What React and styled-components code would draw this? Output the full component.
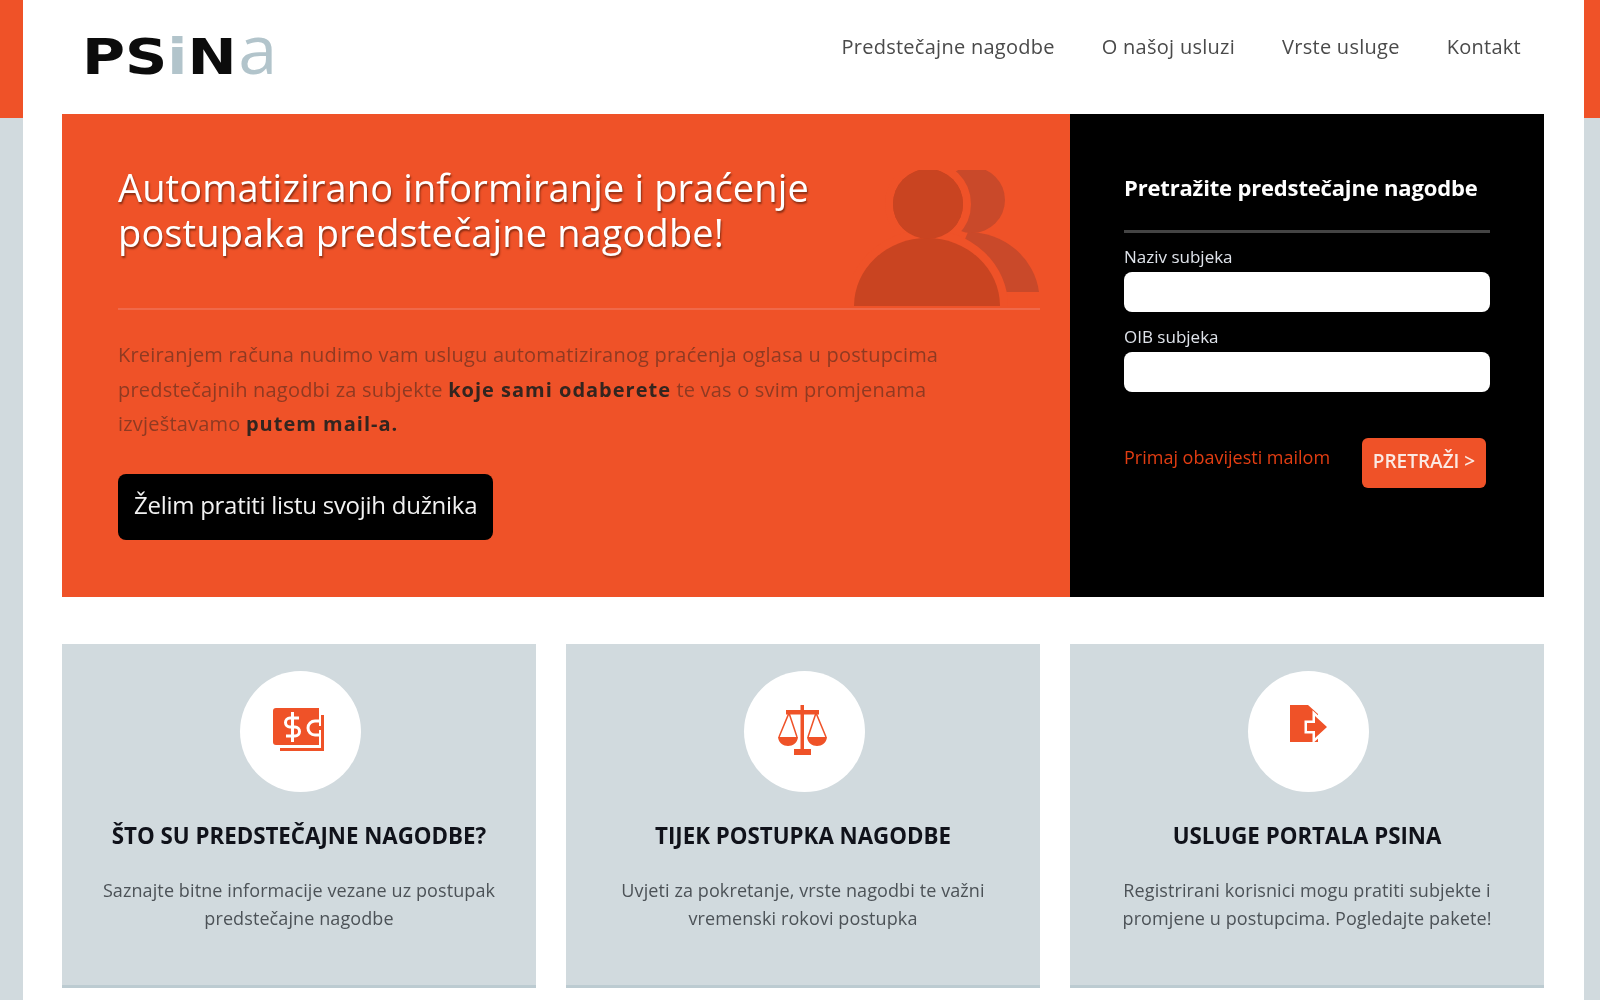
import React from "react";
import styled, { createGlobalStyle } from "styled-components";

const orange = "#ef5228";
const grey = "#d1dade";

const GlobalStyle = createGlobalStyle`
  html, body {
    margin: 0;
    padding: 0;
    height: 1000px;
    overflow: hidden;
  }
  body {
    font-family: "Open Sans", "Liberation Sans", sans-serif;
    background: linear-gradient(${orange} 0, ${orange} 118px, ${grey} 118px);
  }
`;

const Container = styled.div`
  margin: 0 16px 0 23px;
  height: 1000px;
  background: #fff;
  padding: 0 40px 0 39px;
  box-sizing: border-box;
  overflow: hidden;
  filter: blur(0.4px);
`;

const Header = styled.header`
  height: 114px;
  display: flex;
  justify-content: space-between;
  padding: 0 23px 0 20px;
`;

const Logo = styled.div`
  font-family: "DejaVu Sans", sans-serif;
  font-size: 50px;
  line-height: 50px;
  padding-top: 23px;
  white-space: nowrap;
  transform: scaleX(1.175);
  transform-origin: left top;
`;

const LogoLetter = styled.span`
  color: ${(p) => (p.$light ? "#b2c4cb" : "#0c0c0c")};
  font-weight: 700;
`;

const LogoTail = styled.span`
  display: inline-block;
  margin-left: 1px;
  font-family: "Open Sans", sans-serif;
  font-size: 68px;
  line-height: 50px;
  font-weight: 400;
  color: #b2c4cb;
  transform: scaleX(0.88);
  transform-origin: left center;
`;

const Nav = styled.nav`
  display: flex;
  gap: 47px;
  padding-top: 34px;
`;

const NavLink = styled.a`
  font-size: 20px;
  line-height: 26px;
  letter-spacing: 0.27px;
  color: #4a4a4a;
`;

const Hero = styled.section`
  display: flex;
  height: 483px;
`;

const HeroMain = styled.div`
  position: relative;
  width: 1008px;
  box-sizing: border-box;
  padding: 51px 30px 0 56px;
  background: ${orange};
`;

const HeroTitle = styled.h1`
  margin: 0;
  height: 143px;
  font-size: 38px;
  line-height: 45px;
  letter-spacing: 0.13px;
  font-weight: 400;
  color: #fff;
  text-shadow: 1px 2px 2px rgba(90, 30, 10, 0.7);
  border-bottom: 2px solid #f0694a;
`;

const PeopleIcon = styled.svg`
  position: absolute;
  left: 791px;
  top: 56px;
  width: 187px;
  height: 136px;
`;

const HeroText = styled.p`
  margin: 28px 0 0;
  font-size: 20px;
  line-height: 34.5px;
  letter-spacing: 0.2px;
  color: #8f3a22;

  strong {
    color: #33251f;
    font-weight: 700;
    letter-spacing: 1px;
  }
`;

const HeroButton = styled.a`
  display: inline-block;
  margin-top: 32px;
  padding: 0 16px 5px;
  line-height: 61px;
  background: #000;
  border-radius: 8px;
  font-size: 24px;
  letter-spacing: -0.27px;
  color: #f2f2f2;
`;

const SearchPanel = styled.form`
  width: 474px;
  box-sizing: border-box;
  padding: 57px 54px 0;
  background: #000;
`;

const SearchTitle = styled.h2`
  margin: 0;
  padding-bottom: 27px;
  border-bottom: 3px solid #444;
  font-size: 22px;
  line-height: 32px;
  letter-spacing: -0.17px;
  font-weight: 700;
  color: #fff;
`;

const FieldLabel = styled.label`
  display: block;
  margin-top: ${(p) => p.$top}px;
  font-size: 17px;
  line-height: 24px;
  color: #dfe3ea;
`;

const Input = styled.input`
  display: block;
  width: 100%;
  height: 40px;
  margin-top: 3px;
  box-sizing: border-box;
  border: 0;
  border-radius: 8px;
  background: #fff;
`;

const SearchRow = styled.div`
  display: flex;
  justify-content: space-between;
  align-items: flex-start;
  margin-top: 46px;
  padding-right: 4px;
`;

const NotifyLink = styled.a`
  margin-top: 6px;
  font-size: 18px;
  line-height: 26px;
  color: #e23d12;
`;

const SearchButton = styled.button`
  width: 124px;
  height: 50px;
  padding: 0 0 4px;
  border: 0;
  border-radius: 6px;
  background: ${orange};
  font-family: inherit;
  font-size: 19px;
  font-weight: 600;
  color: #fbe9e3;
`;

const Cards = styled.section`
  display: grid;
  grid-template-columns: repeat(3, 474px);
  gap: 30px;
  margin-top: 47px;
`;

const Card = styled.article`
  height: 344px;
  box-sizing: border-box;
  padding-top: 27px;
  background: ${grey};
  border-bottom: 3px solid #bccbd1;
  text-align: center;
`;

const Circle = styled.div`
  display: flex;
  justify-content: center;
  align-items: center;
  width: 121px;
  height: 121px;
  margin: 0 175px 0 178px;
  border-radius: 50%;
  background: #fff;
`;

const CardTitle = styled.h3`
  margin: 27px 0 0;
  font-size: 22.3px;
  line-height: 34px;
  font-weight: 700;
  color: #10121a;
`;

const CardText = styled.p`
  margin: 23px 0 0;
  font-size: 18px;
  line-height: 28px;
  letter-spacing: 0.1px;
  color: #4c5257;
`;

const Glyph = styled.svg`
  display: block;
  fill: ${orange};
  margin: ${(p) => p.$margin || "0"};
`;

const MoneyIcon = () => (
  <Glyph width="52" height="44" viewBox="0 0 52 44" $margin="-4px 3px 0 0">
    <path d="M3 0H46V37H3A3 3 0 0 1 0 34V3A3 3 0 0 1 3 0Z" />
    <path d="M48 7H51V43H7V40H48Z" />
    <path
      d="M26 10H17A4.5 4.5 0 0 0 17 19H22A4.5 4.5 0 0 1 22 28H13M19.5 4V34"
      fill="none"
      stroke="#fff"
      strokeWidth="3"
    />
    <path d="M46 13H42A6.5 6.5 0 0 0 42 27H46" fill="none" stroke="#fff" strokeWidth="3" />
    <path d="M41 18H48V22H41Z" />
  </Glyph>
);

const ScaleIcon = () => (
  <Glyph width="49" height="50" viewBox="0 0 49 50" $margin="-3px 5px 0 0">
    <path d="M22.5 0H26V5H41V9.5H26V44H33V50H16V44H22.5V9.5H8V5H22.5Z" />
    <path d="M0 32H20C19 44 1 44 0 32Z" />
    <path d="M29 32H49C48 44 30 44 29 32Z" />
    <path d="M1 32L11 8L19 32M30 32L38 8L48 32" fill="none" stroke={orange} strokeWidth="1.5" />
  </Glyph>
);

const FileIcon = () => (
  <Glyph width="38" height="38" viewBox="0 0 38 38" $margin="-16px 0 0">
    <path d="M0 0H18L28 9V37H0Z" />
    <path d="M17 18H25V11L37 22L25 33V26H17Z" fill="#fff" stroke="#fff" strokeWidth="5" />
    <path d="M17 18H25V11L37 22L25 33V26H17Z" />
  </Glyph>
);

const cards = [
  {
    title: "ŠTO SU PREDSTEČAJNE NAGODBE?",
    lines: ["Saznajte bitne informacije vezane uz postupak", "predstečajne nagodbe"],
    icon: <MoneyIcon />,
  },
  {
    title: "TIJEK POSTUPKA NAGODBE",
    lines: ["Uvjeti za pokretanje, vrste nagodbi te važni", "vremenski rokovi postupka"],
    icon: <ScaleIcon />,
  },
  {
    title: "USLUGE PORTALA PSINA",
    lines: ["Registrirani korisnici mogu pratiti subjekte i", "promjene u postupcima. Pogledajte pakete!"],
    icon: <FileIcon />,
  },
];

const navItems = ["Predstečajne nagodbe", "O našoj usluzi", "Vrste usluge", "Kontakt"];

const App = () => {
  return (
    <>
      <GlobalStyle />
      <Container>
        <Header>
          <Logo>
            <LogoLetter>PS</LogoLetter>
            <LogoLetter $light>i</LogoLetter>
            <LogoLetter>N</LogoLetter>
            <LogoTail>a</LogoTail>
          </Logo>
          <Nav>
            {navItems.map((item) => (
              <NavLink key={item}>{item}</NavLink>
            ))}
          </Nav>
        </Header>
        <Hero>
          <HeroMain>
            <HeroTitle>
              Automatizirano informiranje i praćenje
              <br />
              postupaka predstečajne nagodbe!
            </HeroTitle>
            <PeopleIcon viewBox="0 0 187 136">
              <circle cx="119" cy="30" r="33" fill="#c9492a" />
              <path d="M115 62A72 68 0 0 1 186 122H90Z" fill="#c9492a" />
              <circle cx="75" cy="34" r="35" fill="#c94421" stroke={orange} strokeWidth="16" paintOrder="stroke" />
              <path d="M1 136A73 68 0 0 1 147 136Z" fill="#c94421" stroke={orange} strokeWidth="16" paintOrder="stroke" />
              <circle cx="75" cy="34" r="35" fill="#c94421" />
            </PeopleIcon>
            <HeroText>
              Kreiranjem računa nudimo vam uslugu automatiziranog praćenja oglasa u postupcima
              <br />
              predstečajnih nagodbi za subjekte <strong>koje sami odaberete</strong> te vas o svim promjenama
              <br />
              izvještavamo <strong>putem mail-a.</strong>
            </HeroText>
            <HeroButton>Želim pratiti listu svojih dužnika</HeroButton>
          </HeroMain>
          <SearchPanel>
            <SearchTitle>Pretražite predstečajne nagodbe</SearchTitle>
            <FieldLabel $top={12}>Naziv subjeka</FieldLabel>
            <Input />
            <FieldLabel $top={13}>OIB subjeka</FieldLabel>
            <Input />
            <SearchRow>
              <NotifyLink>Primaj obavijesti mailom</NotifyLink>
              <SearchButton type="button">PRETRAŽI &gt;</SearchButton>
            </SearchRow>
          </SearchPanel>
        </Hero>
        <Cards>
          {cards.map((card) => (
            <Card key={card.title}>
              <Circle>{card.icon}</Circle>
              <CardTitle>{card.title}</CardTitle>
              <CardText>
                {card.lines[0]}
                <br />
                {card.lines[1]}
              </CardText>
            </Card>
          ))}
        </Cards>
      </Container>
    </>
  );
};

export default App;
